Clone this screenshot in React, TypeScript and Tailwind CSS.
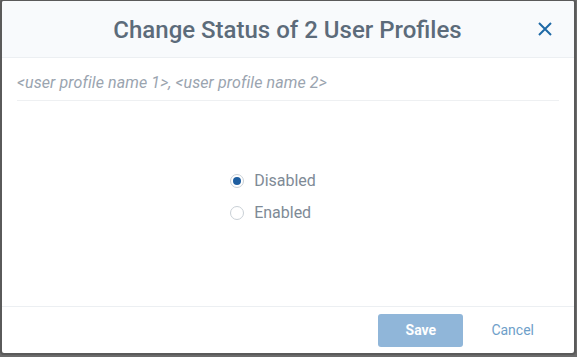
import React from "react";

export default function App() {
  return (
    <div className="w-[577px] h-[357px] bg-[#6b6b6b] overflow-hidden" style={{ fontFamily: "Roboto, 'Liberation Sans', sans-serif" }}>
      <div className="w-[576px] h-[356px] -mt-[1px] bg-white border-2 border-[#5a5a5a] rounded-[4px] flex flex-col overflow-hidden">
        <div className="h-[57px] shrink-0 bg-[#f8fafc] border-b border-[#eceff2] flex items-center justify-center relative">
          <h1 className="text-[24px] font-medium text-[#5c6b7a] mt-[1px] mr-[1px]">Change Status of 2 User Profiles</h1>
          <button className="absolute right-[21px] top-[20px] text-[#1e69a6]">
            <svg width="16" height="16" viewBox="0 0 16 16" fill="none" stroke="currentColor" strokeWidth="2">
              <path d="M2 2 L14 14 M14 2 L2 14" />
            </svg>
          </button>
        </div>
        <div className="px-[15px]">
          <div className="h-[43px] flex items-center border-b border-[#eef0f2] italic text-[16px] text-[#9aa4af] pt-[7px] tracking-[0.1px]">
            &lt;user profile name 1&gt;, &lt;user profile name 2&gt;
          </div>
        </div>
        <div className="flex-1 flex flex-col items-center pt-[68px]">
          <div className="flex flex-col gap-[8px] ml-[-30px]">
            <label className="flex items-center gap-[10px] text-[16px] text-[#7e8a96]">
              <span className="w-[14px] h-[14px] rounded-full border border-[#c9d0d6] flex items-center justify-center">
                <span className="w-[8px] h-[8px] rounded-full bg-[#1e5ea0]" />
              </span>
              Disabled
            </label>
            <label className="flex items-center gap-[10px] text-[16px] text-[#7e8a96]">
              <span className="w-[14px] h-[14px] rounded-full border border-[#c9d0d6]" />
              Enabled
            </label>
          </div>
        </div>
        <div className="h-[47px] shrink-0 border-t border-[#eceff2] flex items-center justify-end pr-[40px] gap-[28px]">
          <button className="w-[85px] h-[33px] rounded-[3px] bg-[#90b6d9] text-white text-[14px] font-bold">Save</button>
          <button className="text-[14px] text-[#6ea0c9]">Cancel</button>
        </div>
      </div>
    </div>
  );
}
